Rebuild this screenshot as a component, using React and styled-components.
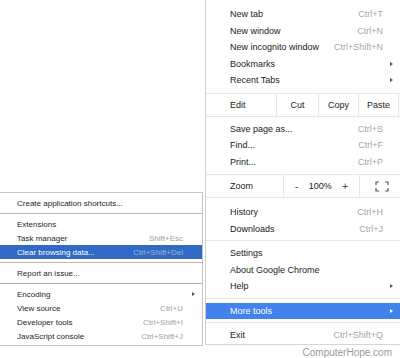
import React from "react";
import styled, { createGlobalStyle } from "styled-components";

const Global = createGlobalStyle`
  html, body {
    margin: 0;
    padding: 0;
    background: #fff;
  }
`;

const Page = styled.div`
  position: relative;
  width: 400px;
  height: 358px;
  overflow: hidden;
  background: #fff;
  font-family: "Liberation Sans", Arial, sans-serif;
`;

const MainMenu = styled.div`
  margin-left: 205px;
  width: 200px;
  padding-top: 6px;
  border-left: 1px solid #cfcfcf;
  border-bottom: 1px solid #d6d6d6;
  background: #fff;
  font-size: 9px;
  color: #222;
`;

const Item = styled.div`
  display: flex;
  align-items: center;
  height: 16.5px;
  padding: 0 13px 0 24px;
  background: ${(p) => (p.$active ? "#4282ed" : "transparent")};
  color: ${(p) => (p.$active ? "#fff" : "inherit")};
`;

const Label = styled.span`
  flex: 1;
  white-space: nowrap;
`;

const Shortcut = styled.span`
  margin-right: 10px;
  color: #a6a6a6;
  white-space: nowrap;
`;

const Arrow = styled.span`
  width: 0;
  height: 0;
  border-top: 2.5px solid transparent;
  border-bottom: 2.5px solid transparent;
  border-left: 3px solid ${(p) => (p.$light ? "#fff" : "#555")};
`;

const Separator = styled.div`
  height: 1px;
  margin: 3px 0 4px;
  background: #e6e6e6;
`;

const ButtonRow = styled.div`
  display: flex;
  align-items: stretch;
  height: 22px;
  margin: 4px 0 ${(p) => p.$after || 4}px;
  border-top: 1px solid #e6e6e6;
  border-bottom: 1px solid #e6e6e6;
`;

const RowLabel = styled.div`
  display: flex;
  align-items: center;
  width: ${(p) => p.$w}px;
  padding-left: 24px;
  box-sizing: border-box;
`;

const Cell = styled.div`
  display: flex;
  align-items: center;
  justify-content: ${(p) => p.$justify || "center"};
  width: ${(p) => p.$w}px;
  padding: 0 ${(p) => p.$pad || 0}px;
  box-sizing: border-box;
  border-left: 1px solid #e6e6e6;
`;

const Sign = styled.span`
  font-size: 10px;
  color: #444;
`;

const Watermark = styled.div`
  margin-top: 1px;
  padding-right: 8px;
  text-align: right;
  font-size: 10px;
  line-height: 13px;
  color: #9a9a9a;
`;

const SubMenu = styled.div`
  position: absolute;
  left: 0;
  top: 192px;
  width: 203px;
  box-sizing: border-box;
  padding: 3px 0 2px;
  border: 1px solid #c4c4c4;
  border-left: none;
  background: #fff;
  font-size: 8px;
  color: #1e1e1e;
`;

const SubItem = styled.div`
  display: flex;
  align-items: center;
  height: 14px;
  padding: 0 7px 0 17px;
  background: ${(p) => (p.$active ? "#316ac5" : "transparent")};
  color: ${(p) => (p.$active ? "#fff" : "inherit")};
`;

const SubShortcut = styled.span`
  margin-right: 12px;
  color: ${(p) => (p.$active ? "#9db4dd" : "#a0a0a0")};
  white-space: nowrap;
`;

const SubSeparator = styled.div`
  height: 1px;
  margin: 3px 0 3px;
  background: #b4b4b4;
`;

const FullscreenIcon = () => (
  <svg width="14" height="11" viewBox="0 0 14 11">
    <g fill="none" stroke="#555" strokeWidth="1.2">
      <path d="M1 4V1h3" />
      <path d="M10 1h3v3" />
      <path d="M13 7v3h-3" />
      <path d="M4 10H1V7" />
    </g>
  </svg>
);

const MenuItem = ({ label, shortcut, arrow, active }) => (
  <Item $active={active}>
    <Label>{label}</Label>
    {shortcut && <Shortcut>{shortcut}</Shortcut>}
    {arrow && <Arrow $light={active} />}
  </Item>
);

const SubMenuItem = ({ label, shortcut, arrow, active }) => (
  <SubItem $active={active}>
    <Label>{label}</Label>
    {shortcut && <SubShortcut $active={active}>{shortcut}</SubShortcut>}
    {arrow && <Arrow />}
  </SubItem>
);

export default function App() {
  return (
    <Page>
      <Global />
      <MainMenu>
        <MenuItem label="New tab" shortcut="Ctrl+T" />
        <MenuItem label="New window" shortcut="Ctrl+N" />
        <MenuItem label="New incognito window" shortcut="Ctrl+Shift+N" />
        <MenuItem label="Bookmarks" arrow />
        <MenuItem label="Recent Tabs" arrow />
        <ButtonRow>
          <RowLabel $w={70}>Edit</RowLabel>
          <Cell $w={42}>Cut</Cell>
          <Cell $w={40}>Copy</Cell>
          <Cell $w={40}>Paste</Cell>
          <Cell $w={8} />
        </ButtonRow>
        <MenuItem label="Save page as..." shortcut="Ctrl+S" />
        <MenuItem label="Find..." shortcut="Ctrl+F" />
        <MenuItem label="Print..." shortcut="Ctrl+P" />
        <ButtonRow $after={6}>
          <RowLabel $w={77}>Zoom</RowLabel>
          <Cell $w={76} $justify="space-between" $pad={11}>
            <Sign>-</Sign>
            <span>100%</span>
            <Sign>+</Sign>
          </Cell>
          <Cell $w={47} $justify="flex-start" $pad={15}>
            <FullscreenIcon />
          </Cell>
        </ButtonRow>
        <MenuItem label="History" shortcut="Ctrl+H" />
        <MenuItem label="Downloads" shortcut="Ctrl+J" />
        <Separator />
        <MenuItem label="Settings" />
        <MenuItem label="About Google Chrome" />
        <MenuItem label="Help" arrow />
        <Separator />
        <MenuItem label="More tools" arrow active />
        <Separator />
        <MenuItem label="Exit" shortcut="Ctrl+Shift+Q" />
      </MainMenu>
      <Watermark>ComputerHope.com</Watermark>

      <SubMenu>
        <SubMenuItem label="Create application shortcuts..." />
        <SubSeparator />
        <SubMenuItem label="Extensions" />
        <SubMenuItem label="Task manager" shortcut="Shift+Esc" />
        <SubMenuItem label="Clear browsing data..." shortcut="Ctrl+Shift+Del" active />
        <SubSeparator />
        <SubMenuItem label="Report an issue..." />
        <SubSeparator />
        <SubMenuItem label="Encoding" arrow />
        <SubMenuItem label="View source" shortcut="Ctrl+U" />
        <SubMenuItem label="Developer tools" shortcut="Ctrl+Shift+I" />
        <SubMenuItem label="JavaScript console" shortcut="Ctrl+Shift+J" />
      </SubMenu>
    </Page>
  );
}
